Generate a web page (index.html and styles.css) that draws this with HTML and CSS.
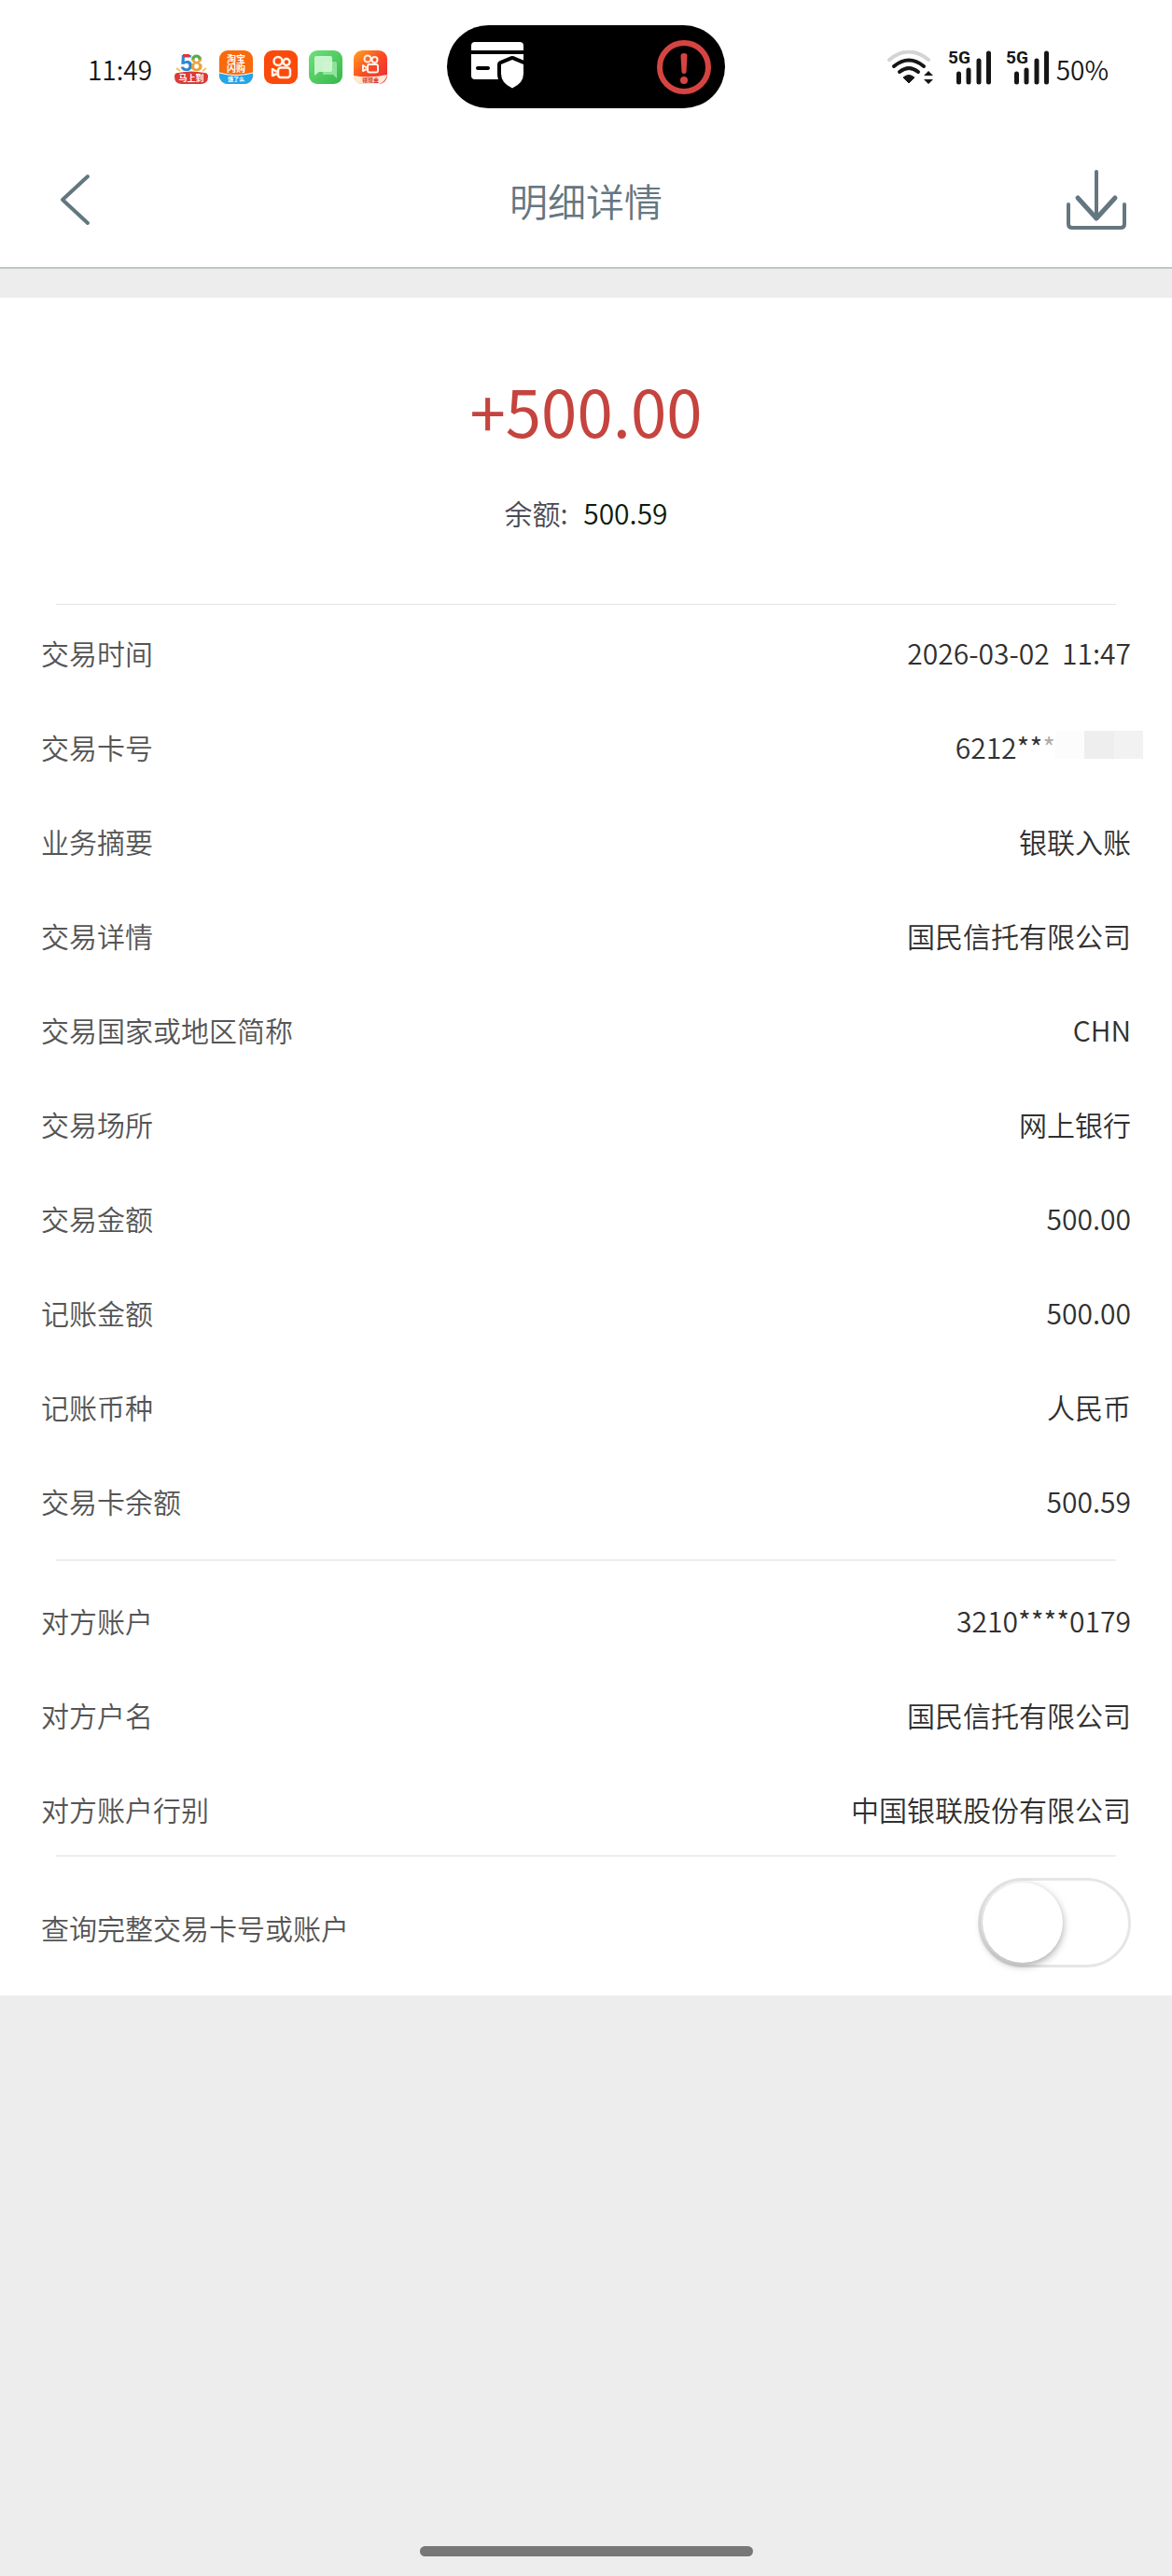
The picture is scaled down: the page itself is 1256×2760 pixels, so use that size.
FILE: index.html
```html
<!DOCTYPE html>
<html lang="zh-CN">
<head>
  <meta charset="UTF-8" />
  <meta name="viewport" content="width=device-width, initial-scale=1.0" />
  <title>明细详情</title>
  <link rel="stylesheet" href="styles.css">
</head>
<body>
  <div class="status-bar">
    <div class="status-left">
      <span class="status-text">11:49</span>
      <div class="app-icons">
        <svg class="app-icon" viewBox="0 0 36 36">
          <text x="6" y="22" class="logo-num" fill="#2f86d0">5</text>
          <path d="M9 4h7v3h-7z" fill="#e0343a" />
          <text x="17" y="22" class="logo-num" fill="#e8a33a">8</text>
          <path d="M20 9.500a3.500 3.500 0 1 1 7 0" fill="none" stroke="#4cae4f" stroke-width="3" />
          <path d="M2 19l4 3M34 19l-4 3" stroke="#f5bf5a" stroke-width="2" />
          <path d="M0 28q0-4 4-4 14-3 28 0 4 0 4 4 0 8-8 8H8q-8 0-8-8z" fill="#dc3a35" />
          <text x="18" y="33" class="logo-small" fill="#fff">马上到</text>
        </svg>
        <svg class="app-icon" viewBox="0 0 36 36">
          <clipPath id="round"><rect width="36" height="36" rx="9" /></clipPath>
          <g clip-path="url(#round)">
            <rect width="36" height="36" fill="#f96a0c" />
            <path d="M0 24q18 5 36 0v12H0z" fill="#23a6ea" />
            <path d="M0 24q18 5 36 0" fill="none" stroke="#fff" />
          </g>
          <text x="18" y="13" class="logo-mid" fill="#fff">淘宝</text>
          <text x="18" y="23" class="logo-mid" fill="#fff">闪购</text>
          <text x="18" y="33" class="logo-tiny" fill="#fff">饿了么</text>
        </svg>
        <svg class="app-icon" viewBox="0 0 36 36">
          <rect width="36" height="36" rx="9" fill="#fb4a0b" />
          <g fill="none" stroke="#fff3e8" stroke-width="2.500">
            <circle cx="15" cy="11.500" r="4.500" />
            <circle cx="24" cy="12.500" r="3.500" />
            <rect x="15" y="18.500" width="13" height="10.500" rx="3" />
            <path d="M14 23l-5-3v7l5-2" stroke-linejoin="round" />
          </g>
        </svg>
        <svg class="app-icon" viewBox="0 0 36 36">
          <linearGradient id="green" x2="1" y2="1">
            <stop offset="0" stop-color="#6fe07c" />
            <stop offset="1" stop-color="#35b84a" />
          </linearGradient>
          <rect width="36" height="36" rx="9" fill="url(#green)" />
          <path d="M15 12h13q2 0 2 2v16l-4-4H15z" fill="#8fe39a" />
          <path d="M8 6h15q2 0 2 2v13q0 2-2 2H11l-5 4V8q0-2 2-2z" fill="#d4f7d6" opacity=".9" />
        </svg>
        <svg class="app-icon" viewBox="0 0 36 36">
          <linearGradient id="warm" x2="1" y2="1">
            <stop offset="0" stop-color="#ffa21f" />
            <stop offset=".5" stop-color="#fb4a24" />
            <stop offset="1" stop-color="#e8283c" />
          </linearGradient>
          <rect width="36" height="36" rx="9" fill="url(#warm)" />
          <g fill="none" stroke="#fff3e8" stroke-width="2">
            <circle cx="15" cy="9" r="3.500" />
            <circle cx="22.500" cy="10" r="3" />
            <rect x="15" y="15" width="11" height="8.500" rx="2" />
            <path d="M14 18.500l-4-2.500v6l4-2" stroke-linejoin="round" />
          </g>
          <path d="M0 27q18 3 36-1-2 8-9 10H9q-7 0-9-7z" fill="#ffe9d2" />
          <text x="18" y="34" class="logo-tiny" fill="#d63427">领现金</text>
        </svg>
      </div>
    </div>

    <div class="island">
      <svg width="58" height="54" viewBox="0 0 58 54">
        <path d="M4 0h48q4 0 4 4v5H0V4q0-4 4-4z" fill="#fff" />
        <path d="M0 13h56v27H4q-4 0-4-4z" fill="#fff" />
        <path d="M7 28h11" stroke="#000" stroke-width="4" stroke-linecap="round" />
        <path d="M44 19l12 5v10q0 10-12 15.500Q32 44 32 34V24z" fill="#fff" stroke="#000" stroke-width="8" stroke-linejoin="round" />
        <path d="M44 19l12 5v10q0 10-12 15.500Q32 44 32 34V24z" fill="#fff" />
        <path d="M57 18h1v36h-1z" fill="#000" />
      </svg>
      <svg width="58" height="58" viewBox="0 0 58 58">
        <circle cx="29" cy="29" r="26" fill="none" stroke="#d64442" stroke-width="6" />
        <path d="M25.500 17q0-3 3.500-3t3.500 3l-1 17q0 2-2.500 2t-2.500-2z" fill="#d64442" />
        <circle cx="29" cy="43" r="4" fill="#d64442" />
      </svg>
    </div>

    <div class="status-right">
      <svg class="wifi" viewBox="0 0 50 36">
        <g fill="none" stroke-width="4" stroke-linecap="round">
          <path d="M3 10q21-17 42 0" stroke="#d4d4d4" />
          <path d="M8 17q16-13 32 0" stroke="#161616" />
          <path d="M14 23q10-8 20 0" stroke="#161616" />
        </g>
        <path d="M18 29q6-5 12 0l-6 6z" fill="#161616" stroke="#161616" stroke-linejoin="round" />
        <path d="M40 27l5-5 5 5zM40 31l5 5 5-5z" fill="#161616" />
      </svg>
      <svg class="signal" viewBox="0 0 46 38">
        <text x="0" y="15" class="net">5G</text>
        <path d="M11.500 26v9M22 22v13M33 12v23M43.500 4v31" stroke="#161616" stroke-width="5" stroke-linecap="round" />
      </svg>
      <svg class="signal" viewBox="0 0 46 38">
        <text x="0" y="15" class="net">5G</text>
        <path d="M11.500 26v9M22 22v13M33 12v23M43.500 4v31" stroke="#161616" stroke-width="5" stroke-linecap="round" />
      </svg>
      <span class="status-text">50%</span>
    </div>
  </div>

  <header class="nav">
    <button class="nav-button" aria-label="返回">
      <svg width="34" height="58" viewBox="0 0 34 58">
        <path d="M31 4L4 29l27 25" fill="none" stroke="#647680" stroke-width="4" stroke-linecap="round" stroke-linejoin="round" />
      </svg>
    </button>
    <h1>明细详情</h1>
    <button class="nav-button" aria-label="下载">
      <svg width="66" height="66" viewBox="0 0 66 66">
        <g fill="none" stroke="#647680" stroke-width="4" stroke-linecap="round" stroke-linejoin="round">
          <path d="M33 3v50" />
          <path d="M13 31l20 22 20-22" stroke-width="5" />
          <path d="M3 38v21q0 4 4 4h52q4 0 4-4V38" />
        </g>
      </svg>
    </button>
  </header>

  <main>
    <section class="summary">
      <p class="amount">+500.00</p>
      <p class="balance">余额: <span>500.59</span></p>
    </section>

    <dl class="details">
      <div class="row"><dt>交易时间</dt><dd>2026-03-02  11:47</dd></div>
      <div class="row"><dt>交易卡号</dt><dd class="masked">6212**<span class="fade">*</span><i class="mask"></i></dd></div>
      <div class="row"><dt>业务摘要</dt><dd>银联入账</dd></div>
      <div class="row"><dt>交易详情</dt><dd>国民信托有限公司</dd></div>
      <div class="row"><dt>交易国家或地区简称</dt><dd>CHN</dd></div>
      <div class="row"><dt>交易场所</dt><dd>网上银行</dd></div>
      <div class="row"><dt>交易金额</dt><dd>500.00</dd></div>
      <div class="row"><dt>记账金额</dt><dd>500.00</dd></div>
      <div class="row"><dt>记账币种</dt><dd>人民币</dd></div>
      <div class="row"><dt>交易卡余额</dt><dd>500.59</dd></div>
    </dl>

    <dl class="details other-side">
      <div class="row"><dt>对方账户</dt><dd>3210****0179</dd></div>
      <div class="row"><dt>对方户名</dt><dd>国民信托有限公司</dd></div>
      <div class="row"><dt>对方账户行别</dt><dd>中国银联股份有限公司</dd></div>
    </dl>

    <div class="full-query">
      <label for="show-full">查询完整交易卡号或账户</label>
      <input type="checkbox" id="show-full" class="switch">
    </div>
  </main>

  <div class="home-bar"></div>
</body>
</html>
```

FILE: styles.css
```css
* {
  box-sizing: border-box;
}
body {
  margin: 0;
  min-height: 100vh;
  display: flex;
  flex-direction: column;
  background-color: #ededed;
  color: #303030;
  font-family: "Noto Sans CJK SC", sans-serif;
  font-size: 30px;
  font-weight: 350;
  line-height: 44px;
}
h1, p, dl, dd {
  margin: 0;
}

/* status bar */
.status-bar {
  display: grid;
  grid-template-columns: 1fr 298px 1fr;
  align-items: center;
  padding-top: 27px;
  background-color: #fff;
}
.status-left, .status-right {
  display: flex;
  align-items: center;
}
.status-left {
  padding-left: 94px;
  gap: 24px;
}
.status-right {
  justify-content: flex-end;
  padding-right: 68px;
  gap: 16px;
}
.status-text {
  padding-top: 4px;
  color: #161616;
  font-size: 28px;
}
.signal + .status-text {
  margin-left: -8px;
}
.app-icons {
  display: flex;
  gap: 12px;
}
.app-icon {
  width: 36px;
  height: 36px;
  overflow: visible;
}
.logo-num {
  font: bold 24px "Liberation Sans", sans-serif;
}
.logo-mid, .logo-small, .logo-tiny {
  font-weight: bold;
  text-anchor: middle;
}
.logo-mid {
  font-size: 10px;
}
.logo-small {
  font-size: 9px;
}
.logo-tiny {
  font-size: 6px;
}
.island {
  display: flex;
  align-items: center;
  justify-content: space-between;
  height: 89px;
  padding: 0 15px 0 26px;
  border-radius: 45px;
  background-color: #000;
}
.wifi {
  width: 50px;
  height: 36px;
}
.signal {
  width: 46px;
  height: 38px;
  overflow: visible;
}
.net {
  fill: #161616;
  font: bold 19px Roboto, sans-serif;
}

/* title bar */
.nav {
  display: grid;
  grid-template-columns: 1fr auto 1fr;
  align-items: center;
  height: 172px;
  padding: 26px 48px 0;
  border-bottom: 2px solid #c0c5c6;
  background-color: #fff;
}
.nav-button {
  display: flex;
  width: 66px;
  padding: 0;
  border: none;
  background: none;
  cursor: pointer;
}
.nav-button:first-child {
  padding-left: 15px;
}
.nav-button:last-child {
  justify-self: end;
}
.nav h1 {
  color: #647680;
  font-size: 41px;
  font-weight: inherit;
  line-height: 60px;
}

main {
  margin-top: 31px;
  background-color: #fff;
}
.summary {
  padding: 70px 0 76px;
  text-align: center;
}
.amount {
  color: #c5443e;
  font-size: 69px;
  font-weight: 400;
  line-height: 100px;
}
.balance {
  margin-top: 38px;
  color: #4a4a55;
}
.balance span {
  margin-left: 10px;
  color: #0c1c0c;
}

/* sections start with a line that is inset from both edges */
.details::before, .full-query::before {
  content: "";
  display: block;
  height: 1px;
  margin: 0 60px;
  background-color: #e2e2e2;
}
.details {
  padding-bottom: 13px;
}
.other-side {
  padding-bottom: 0;
}
.other-side .row:first-child {
  margin-top: 13px;
}
.row {
  display: flex;
  align-items: center;
  justify-content: space-between;
  height: 101px;
  padding: 0 44px;
}
dt, label {
  color: #555;
}
dd {
  white-space: pre;
}
.masked {
  display: flex;
  align-items: center;
  margin-right: -13px;
}
.fade {
  color: #adadad;
}
.mask {
  width: 94px;
  height: 30px;
  margin-bottom: 4px;
  background: linear-gradient(to right, #fcfcfc 33%, #eee 33%, #eee 67%, #f2f2f2 67%);
}

.full-query {
  display: grid;
  grid-template-columns: 1fr auto;
  align-items: center;
  padding-bottom: 30px;
}
.full-query::before {
  grid-column: 1 / -1;
  margin-bottom: 23px;
}
.full-query label {
  padding: 10px 0 0 44px;
}
.switch {
  appearance: none;
  width: 164px;
  height: 96px;
  margin: 0 44px 0 0;
  padding: 2px;
  border: 3px solid #e6e6e6;
  border-radius: 48px;
  background-color: #fff;
  cursor: pointer;
}
.switch::before {
  content: "";
  display: block;
  width: 86px;
  height: 86px;
  border-radius: 50%;
  background-color: #fff;
  box-shadow: 0 3px 8px rgba(0, 0, 0, 0.35);
}
.switch:checked {
  background-color: #4cd964;
}
.switch:checked::before {
  margin-left: auto;
}

.home-bar {
  width: 357px;
  height: 11px;
  margin: auto auto 21px;
  border-radius: 6px;
  background-color: #777;
}
```
